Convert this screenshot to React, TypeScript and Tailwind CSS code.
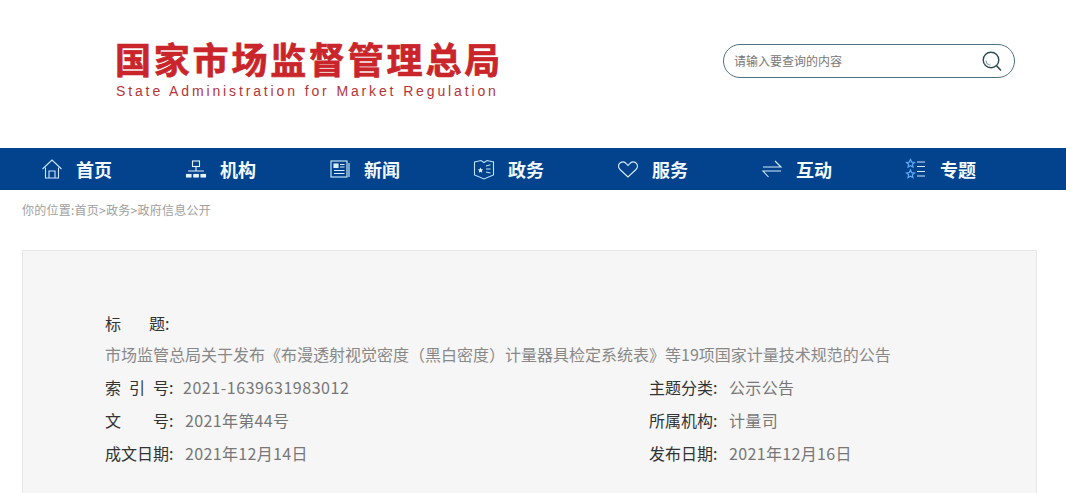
const cjk = { fontFamily: '"Noto Sans CJK SC", sans-serif' }

const HomeIcon = () => (
    <svg width="22" height="22" viewBox="0 0 22 22" fill="none" stroke="#cfe6fb" strokeWidth="1.1">
        <path d="M1.5 11 11 2l9.5 9" />
        <path d="M4.5 9.5V20h13V9.5" />
        <path d="M8 20v-7h6v7" />
    </svg>
)

const OrgIcon = () => (
    <svg width="22" height="22" viewBox="0 0 22 22" fill="none" stroke="#e6f2fc" strokeWidth="1.1">
        <rect x="7.5" y="3" width="7" height="5.500" />
        <path d="M11 8.500v4.500M3 13h16" />
        <rect x="1.500" y="16.500" width="4.500" height="2.500" fill="#e6f2fc" />
        <rect x="8.800" y="16.500" width="4.500" height="2.500" fill="#e6f2fc" />
        <rect x="16" y="16.500" width="4.500" height="2.500" fill="#e6f2fc" />
    </svg>
)

const NewsIcon = () => (
    <svg width="22" height="22" viewBox="0 0 22 22" fill="none" stroke="#d8f0fb" strokeWidth="1.1">
        <rect x="2" y="3" width="16" height="16" />
        <path d="M20 5v14" />
        <rect x="5" y="6" width="4" height="3.500" fill="#d8f0fb" />
        <path d="M11 6.500h4.500M11 9h4.500M5 12.500h10.500M5 15.500h10.500" />
    </svg>
)

const GovIcon = () => (
    <svg width="22" height="22" viewBox="0 0 22 22" fill="none" stroke="#bfe3f8" strokeWidth="1.1">
        <path d="M1.500 4 8 2.500 11 4.500 14 2.500 20.500 4v13L11 21 1.500 17z" />
        <path d="M13 8l4.500-1.200M13 11h4.500M13 14l4.500 1" />
        <path d="M7.500 9.500l.8 1.800 1.900.2-1.400 1.300.4 1.900-1.700-1-1.700 1 .4-1.900-1.400-1.300 1.900-.2z" fill="#e6f2fc" stroke="none" />
    </svg>
)

const HeartIcon = () => (
    <svg width="22" height="22" viewBox="0 0 22 22" fill="none" stroke="#d8ecfa" strokeWidth="1.1">
        <path d="M11 19 3 11.500C1 9.500 1 6.500 3 5c2.300-1.700 5-1 6.500.8L11 7.500 12.500 5.800C14 4 16.700 3.300 19 5c2 1.500 2 4.500 0 6.500z" />
    </svg>
)

const SwapIcon = () => (
    <svg width="22" height="22" viewBox="0 0 22 22" fill="none" stroke="#d8ecfa" strokeWidth="1.1">
        <path d="M2 9h18L14 3" />
        <path d="M20 13H2l5.500 6" />
    </svg>
)

const TopicIcon = () => (
    <svg width="22" height="22" viewBox="0 0 22 22" fill="none" stroke="#5fa8f5" strokeWidth="1.2">
        <path d="M5.500 1.500l1.200 2.600 2.800.3-2.100 1.900.6 2.800-2.500-1.400L3 9.100l.6-2.800L1.500 4.400l2.800-.3z" />
        <path d="M5.500 12l1.200 2.600 2.800.3-2.100 1.900.6 2.800-2.500-1.400L3 19.600l.6-2.800-2.100-1.900 2.800-.3z" />
        <path d="M12 4h8M12 8.500h8M12 13.500h8M12 18h8" stroke="#cfe6fb" strokeWidth="1" />
    </svg>
)

const SearchIcon = () => (
    <svg width="22" height="22" viewBox="0 0 22 22" fill="none" stroke="#2f4a55" strokeWidth="1.4">
        <circle cx="10" cy="10" r="7.800" />
        <path d="M5 10.500c.3 2.500 2 4.300 4.500 4.700" stroke="#7fa0ac" strokeWidth="1.100" />
        <path d="M15.500 15.800 20 20.500" strokeWidth="1.600" />
    </svg>
)

const navItems = [
    { label: "首页", icon: <HomeIcon /> },
    { label: "机构", icon: <OrgIcon /> },
    { label: "新闻", icon: <NewsIcon /> },
    { label: "政务", icon: <GovIcon /> },
    { label: "服务", icon: <HeartIcon /> },
    { label: "互动", icon: <SwapIcon /> },
    { label: "专题", icon: <TopicIcon /> },
]

const Row = ({ label, value }: { label: React.ReactNode; value: React.ReactNode }) => (
    <div className="flex h-[33px] items-center">
        <span className="w-[80px] shrink-0 text-[#333]">{label}</span>
        <span className="tracking-[0.35px] text-[#777]">{value}</span>
    </div>
)

export default function App() {
    return (
        <div className="flex h-[493px] w-[1066px] flex-col overflow-hidden bg-white" style={cjk}>
            {/* Header */}
            <header className="flex h-[148px] shrink-0 items-start justify-between pl-[115px] pr-[51px]">
                <div className="pt-[34px]">
                    <div className="text-[36px] leading-[48px] font-bold tracking-[2.800px] whitespace-nowrap text-[#c9252b] [-webkit-text-stroke:0.7px_#c9252b]">
                        国家市场监督管理总局
                    </div>
                    <div
                        className="ml-[1px] text-[14px] leading-[18px] tracking-[2.870px] whitespace-nowrap text-[#b5343a]"
                        style={{ fontFamily: '"Liberation Sans", sans-serif' }}
                    >
                        State Administration for Market Regulation
                    </div>
                </div>
                <div className="mt-[44px] flex h-[34px] w-[292px] items-center justify-between rounded-full border border-[#4d7280] pr-[11px] pl-[10px]">
                    <span className="text-[12px] text-[#777]">请输入要查询的内容</span>
                    <SearchIcon />
                </div>
            </header>

            {/* Nav */}
            <nav className="flex h-[42px] shrink-0 bg-[#03438e] pl-[41px]">
                {navItems.map((item) => (
                    <div key={item.label} className="flex w-[144px] shrink-0 items-center gap-[13px]">
                        {item.icon}
                        <span className="text-[18px] font-bold text-[#f2fafe]">{item.label}</span>
                    </div>
                ))}
            </nav>

            {/* Breadcrumb */}
            <div className="flex h-[40px] shrink-0 items-center pl-[22px] text-[12px] tracking-[0.25px] text-[#a0a0a0]">
                你的位置:首页&gt;政务&gt;政府信息公开
            </div>

            {/* Info panel, runs off the bottom of the page */}
            <div className="mx-[22px] mt-[20px] w-[1015px] flex-1 border border-b-0 border-[#e6e6e6] bg-[#f6f6f6] pt-[55px] pl-[82px] text-[16px]">
                <div className="flex h-[33px] items-center text-[#333]">
                    <span className="w-[44px]">标</span>
                    <span>题:</span>
                </div>
                <div className="flex h-[29px] items-center whitespace-nowrap text-[#888]">
                    市场监管总局关于发布《布漫透射视觉密度（黑白密度）计量器具检定系统表》等19项国家计量技术规范的公告
                </div>
                <div className="mt-[2px] grid grid-cols-[544px_1fr]">
                    <Row
                        label={<span className="flex gap-[8px]"><span>索</span><span>引</span><span>号:</span></span>}
                        value={<span className="ml-[-2px] tracking-[0.55px]">2021-1639631983012</span>}
                    />
                    <Row label="主题分类:" value="公示公告" />
                    <Row
                        label={<span className="flex gap-[32px]"><span>文</span><span>号:</span></span>}
                        value="2021年第44号"
                    />
                    <Row label="所属机构:" value="计量司" />
                    <Row label="成文日期:" value="2021年12月14日" />
                    <Row label="发布日期:" value="2021年12月16日" />
                </div>
            </div>
        </div>
    )
}
